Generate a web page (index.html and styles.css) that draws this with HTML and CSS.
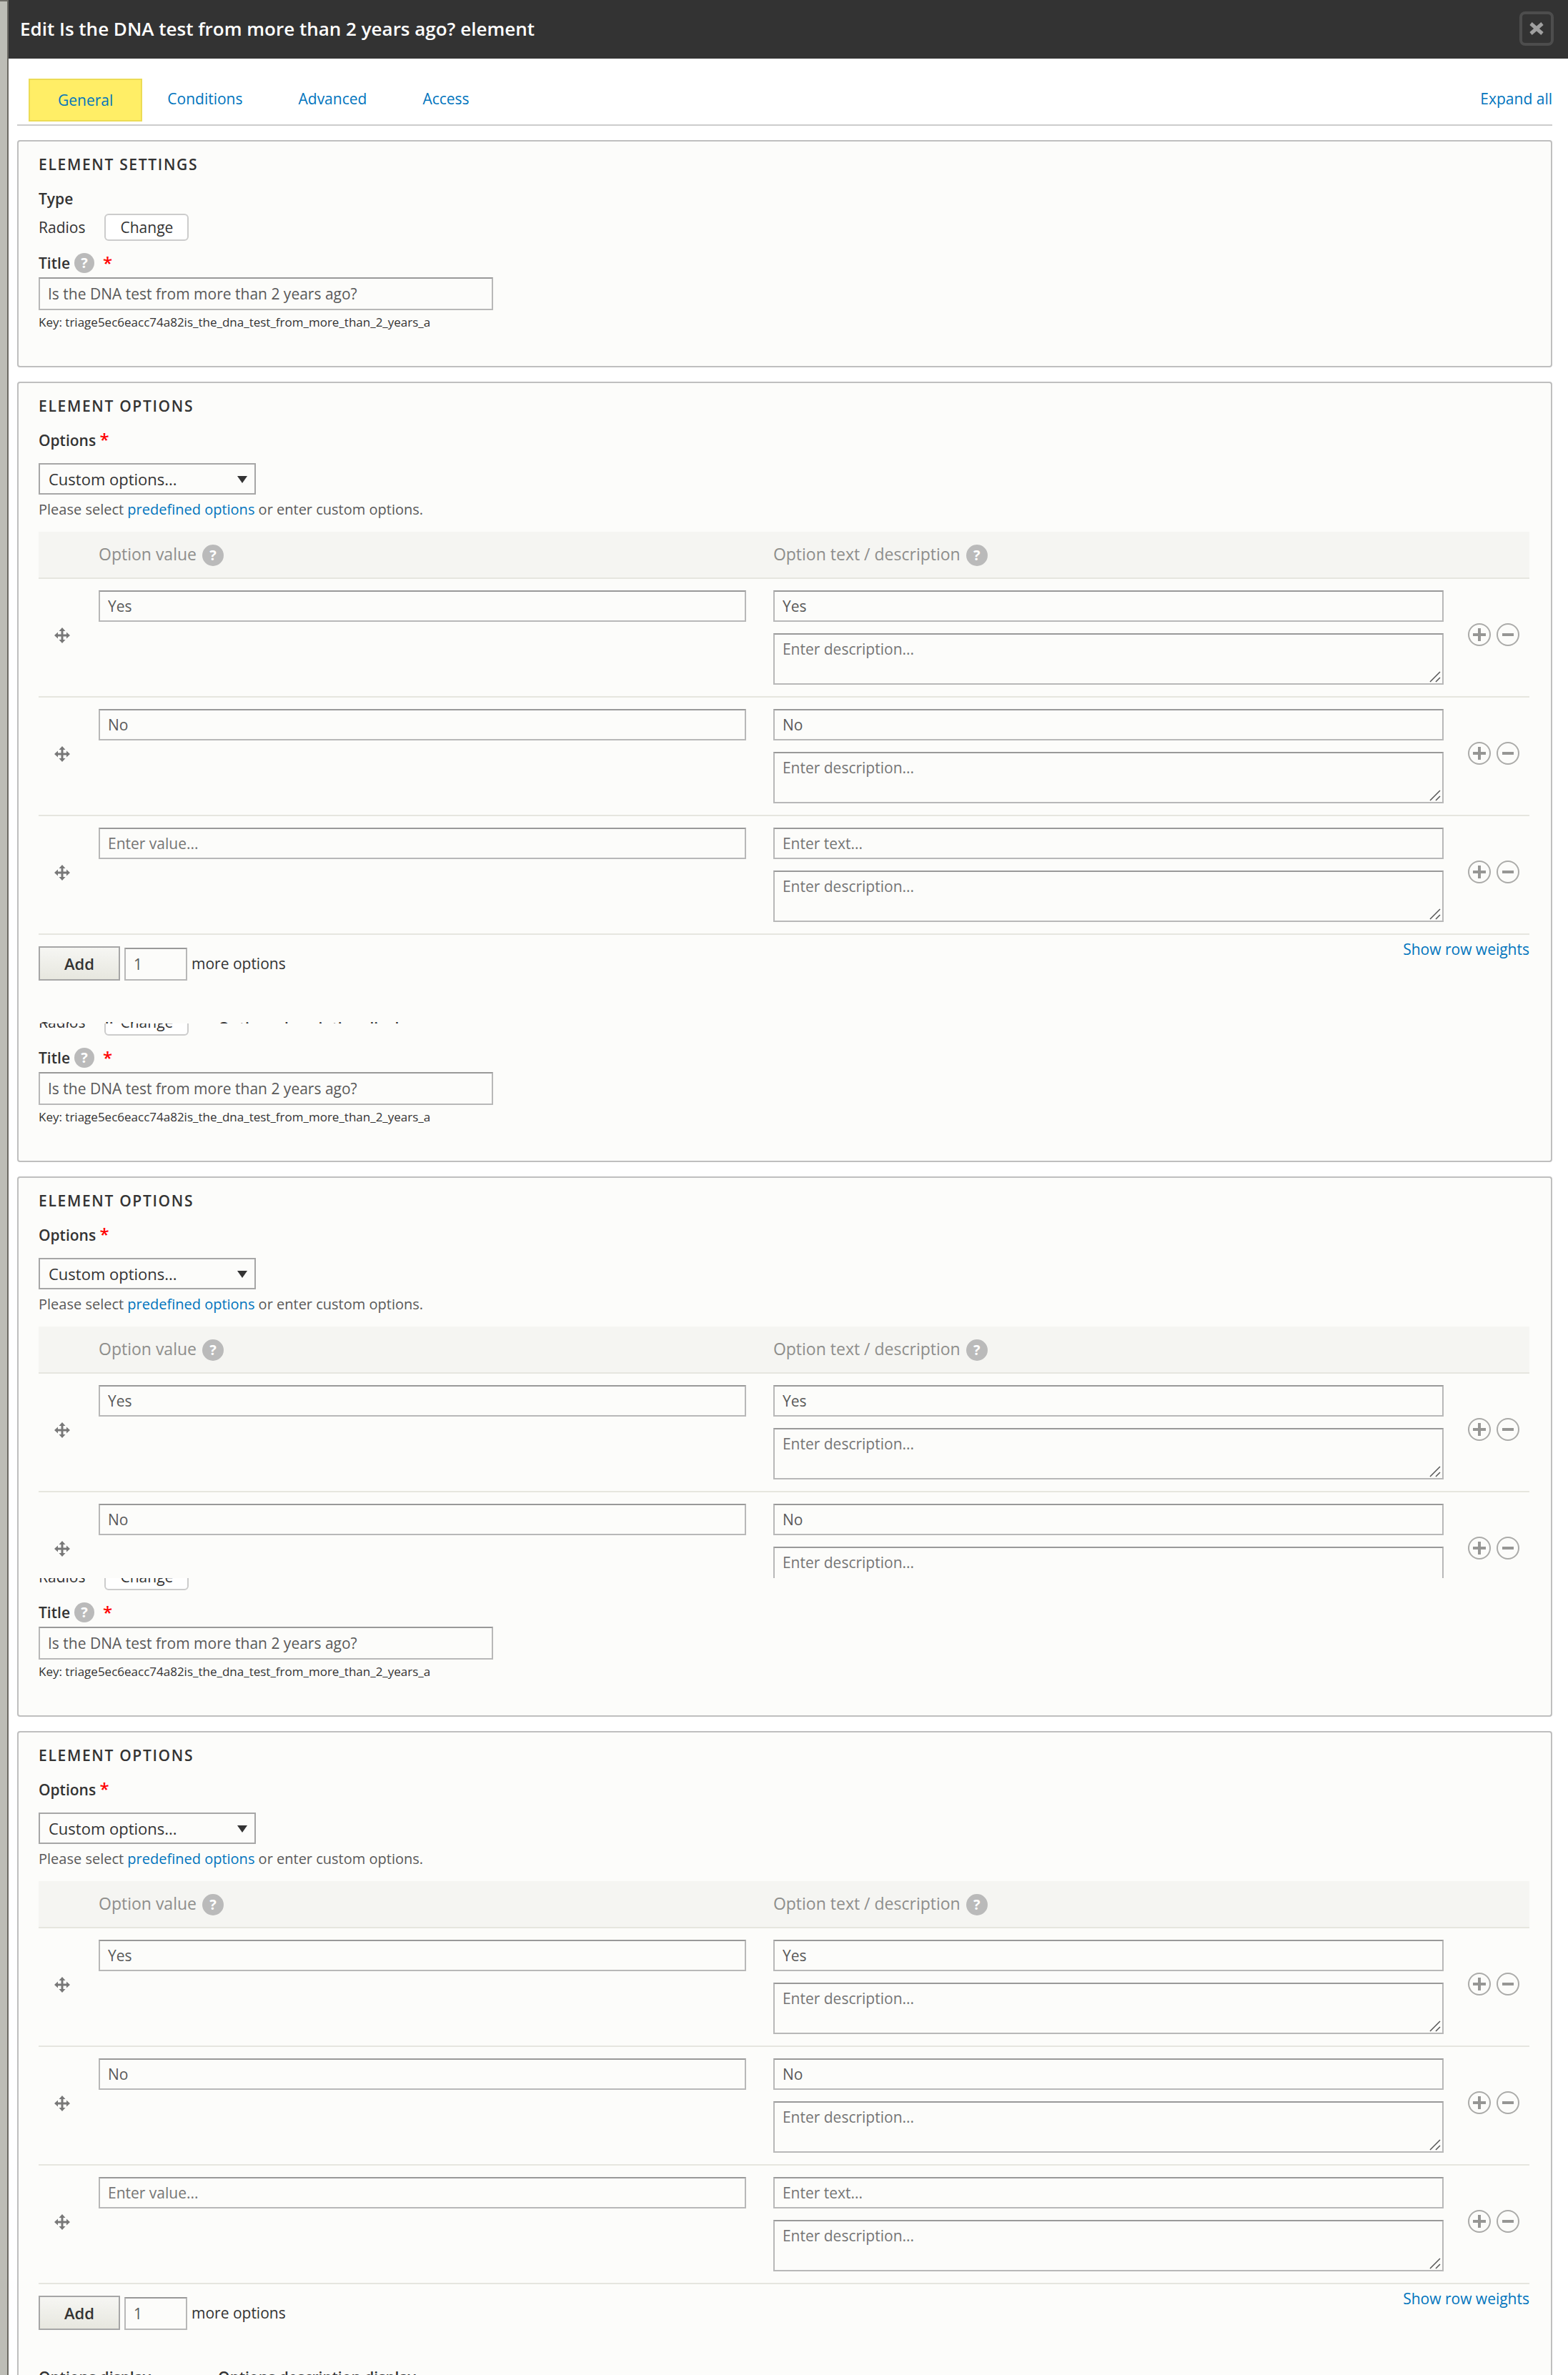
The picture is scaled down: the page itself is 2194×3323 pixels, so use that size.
FILE: index.html
```html
<!DOCTYPE html>
<html lang="en">
<head>
  <meta charset="UTF-8">
  <meta name="viewport" content="width=device-width, initial-scale=1.0">
  <title>Edit element</title>
  <link rel="stylesheet" href="styles.css">
</head>
<body>
  <!-- Shared icons -->
  <svg class="sprite" aria-hidden="true">
    <symbol id="icon-move" viewBox="0 0 22 22">
      <path d="M11 0 15.500 5H12.500V9.500H17V6.500L22 11 17 15.500V12.500H12.500V17H15.500L11 22 6.500 17H9.500V12.500H5V15.500L0 11 5 6.500V9.500H9.500V5H6.500Z" fill="#787878"/>
    </symbol>
    <symbol id="icon-plus" viewBox="0 0 32 32">
      <circle cx="16" cy="16" r="15" fill="none" stroke="#ababa9" stroke-width="2"/>
      <path d="M7 16H25M16 7V25" stroke="#969694" stroke-width="4"/>
    </symbol>
    <symbol id="icon-minus" viewBox="0 0 32 32">
      <circle cx="16" cy="16" r="15" fill="none" stroke="#ababa9" stroke-width="2"/>
      <path d="M8 16H24" stroke="#969694" stroke-width="4"/>
    </symbol>
    <symbol id="icon-grip" viewBox="0 0 16 16">
      <path d="M1 15 15 1M9 15 15 9" stroke="#555" stroke-width="1.500"/>
    </symbol>
    <symbol id="icon-arrow" viewBox="0 0 14 10">
      <path d="M0 0H14L7 10Z" fill="#333"/>
    </symbol>
  </svg>

  <div class="dialog">
    <header class="titlebar">
      <h1>Edit Is the DNA test from more than 2 years ago? element</h1>
      <button class="close" type="button" aria-label="Close">
        <svg width="20" height="18" viewBox="0 0 20 18"><path d="M2 2 18 16M18 2 2 16" stroke="#a0a0a0" stroke-width="5"/></svg>
      </button>
    </header>

    <div class="pane">
      <nav class="tabs">
        <a class="tab active" href="#general">General</a>
        <a class="tab" href="#conditions">Conditions</a>
        <a class="tab" href="#advanced">Advanced</a>
        <a class="tab" href="#access">Access</a>
        <a class="expand" href="#expand">Expand all</a>
      </nav>

      <section class="panel">
        <h2>Element settings</h2>
        <div class="label">Type</div>
        <div class="type-row"><span>Radios</span><button class="change" type="button">Change</button></div>
        <div class="title-label"><label for="title-1">Title</label><span class="help">?</span><span class="required">*</span></div>
        <input class="text title-input" id="title-1" type="text" value="Is the DNA test from more than 2 years ago?">
        <p class="key">Key: triage5ec6eacc74a82is_the_dna_test_from_more_than_2_years_a</p>
      </section>

      <section class="panel open">
        <h2>Element options</h2>
        <label class="label" for="options-1">Options <span class="required">*</span></label>
        <div class="select">
          <select id="options-1"><option>Custom options...</option></select>
          <svg class="arrow"><use href="#icon-arrow"/></svg>
        </div>
        <p class="description">Please select <a href="#predefined">predefined options</a> or enter custom options.</p>
        <table class="options">
          <thead>
            <tr>
              <th class="drag"></th>
              <th class="value">Option value <span class="help">?</span></th>
              <th>Option text / description <span class="help">?</span></th>
              <th class="ops"></th>
            </tr>
          </thead>
          <tbody>
            <tr>
              <td class="drag"><svg class="move"><use href="#icon-move"/></svg></td>
              <td class="value"><input class="text" type="text" aria-label="Option value" value="Yes"></td>
              <td>
                <input class="text" type="text" aria-label="Option text" value="Yes">
                <div class="area"><textarea aria-label="Option description" placeholder="Enter description..."></textarea><svg class="grip"><use href="#icon-grip"/></svg></div>
              </td>
              <td class="ops"><div class="actions"><button type="button" aria-label="Add"><svg><use href="#icon-plus"/></svg></button><button type="button" aria-label="Remove"><svg><use href="#icon-minus"/></svg></button></div></td>
            </tr>
            <tr>
              <td class="drag"><svg class="move"><use href="#icon-move"/></svg></td>
              <td class="value"><input class="text" type="text" aria-label="Option value" value="No"></td>
              <td>
                <input class="text" type="text" aria-label="Option text" value="No">
                <div class="area"><textarea aria-label="Option description" placeholder="Enter description..."></textarea><svg class="grip"><use href="#icon-grip"/></svg></div>
              </td>
              <td class="ops"><div class="actions"><button type="button" aria-label="Add"><svg><use href="#icon-plus"/></svg></button><button type="button" aria-label="Remove"><svg><use href="#icon-minus"/></svg></button></div></td>
            </tr>
            <tr>
              <td class="drag"><svg class="move"><use href="#icon-move"/></svg></td>
              <td class="value"><input class="text" type="text" aria-label="Option value" placeholder="Enter value..."></td>
              <td>
                <input class="text" type="text" aria-label="Option text" placeholder="Enter text...">
                <div class="area"><textarea aria-label="Option description" placeholder="Enter description..."></textarea><svg class="grip"><use href="#icon-grip"/></svg></div>
              </td>
              <td class="ops"><div class="actions"><button type="button" aria-label="Add"><svg><use href="#icon-plus"/></svg></button><button type="button" aria-label="Remove"><svg><use href="#icon-minus"/></svg></button></div></td>
            </tr>
          </tbody>
        </table>
        <div class="table-footer">
          <div class="add-row">
            <button class="add" type="button">Add</button>
            <input class="text count" id="more-1" type="text" value="1">
            <label for="more-1">more options</label>
          </div>
          <a href="#weights">Show row weights</a>
        </div>
        <div class="display-row"><span>Options display</span><span>Options description display</span></div>
      </section>
    </div>

    <div class="pane continued short">
      <section class="panel">
        <div class="type-row"><span>Radios</span><button class="change" type="button">Change</button></div>
        <div class="title-label"><label for="title-2">Title</label><span class="help">?</span><span class="required">*</span></div>
        <input class="text title-input" id="title-2" type="text" value="Is the DNA test from more than 2 years ago?">
        <p class="key">Key: triage5ec6eacc74a82is_the_dna_test_from_more_than_2_years_a</p>
      </section>

      <section class="panel open">
        <h2>Element options</h2>
        <label class="label" for="options-2">Options <span class="required">*</span></label>
        <div class="select">
          <select id="options-2"><option>Custom options...</option></select>
          <svg class="arrow"><use href="#icon-arrow"/></svg>
        </div>
        <p class="description">Please select <a href="#predefined">predefined options</a> or enter custom options.</p>
        <table class="options">
          <thead>
            <tr>
              <th class="drag"></th>
              <th class="value">Option value <span class="help">?</span></th>
              <th>Option text / description <span class="help">?</span></th>
              <th class="ops"></th>
            </tr>
          </thead>
          <tbody>
            <tr>
              <td class="drag"><svg class="move"><use href="#icon-move"/></svg></td>
              <td class="value"><input class="text" type="text" aria-label="Option value" value="Yes"></td>
              <td>
                <input class="text" type="text" aria-label="Option text" value="Yes">
                <div class="area"><textarea aria-label="Option description" placeholder="Enter description..."></textarea><svg class="grip"><use href="#icon-grip"/></svg></div>
              </td>
              <td class="ops"><div class="actions"><button type="button" aria-label="Add"><svg><use href="#icon-plus"/></svg></button><button type="button" aria-label="Remove"><svg><use href="#icon-minus"/></svg></button></div></td>
            </tr>
            <tr>
              <td class="drag"><svg class="move"><use href="#icon-move"/></svg></td>
              <td class="value"><input class="text" type="text" aria-label="Option value" value="No"></td>
              <td>
                <input class="text" type="text" aria-label="Option text" value="No">
                <div class="area"><textarea aria-label="Option description" placeholder="Enter description..."></textarea><svg class="grip"><use href="#icon-grip"/></svg></div>
              </td>
              <td class="ops"><div class="actions"><button type="button" aria-label="Add"><svg><use href="#icon-plus"/></svg></button><button type="button" aria-label="Remove"><svg><use href="#icon-minus"/></svg></button></div></td>
            </tr>
          </tbody>
        </table>
      </section>
    </div>

    <div class="pane continued last">
      <section class="panel">
        <div class="type-row"><span>Radios</span><button class="change" type="button">Change</button></div>
        <div class="title-label"><label for="title-3">Title</label><span class="help">?</span><span class="required">*</span></div>
        <input class="text title-input" id="title-3" type="text" value="Is the DNA test from more than 2 years ago?">
        <p class="key">Key: triage5ec6eacc74a82is_the_dna_test_from_more_than_2_years_a</p>
      </section>

      <section class="panel open">
        <h2>Element options</h2>
        <label class="label" for="options-3">Options <span class="required">*</span></label>
        <div class="select">
          <select id="options-3"><option>Custom options...</option></select>
          <svg class="arrow"><use href="#icon-arrow"/></svg>
        </div>
        <p class="description">Please select <a href="#predefined">predefined options</a> or enter custom options.</p>
        <table class="options">
          <thead>
            <tr>
              <th class="drag"></th>
              <th class="value">Option value <span class="help">?</span></th>
              <th>Option text / description <span class="help">?</span></th>
              <th class="ops"></th>
            </tr>
          </thead>
          <tbody>
            <tr>
              <td class="drag"><svg class="move"><use href="#icon-move"/></svg></td>
              <td class="value"><input class="text" type="text" aria-label="Option value" value="Yes"></td>
              <td>
                <input class="text" type="text" aria-label="Option text" value="Yes">
                <div class="area"><textarea aria-label="Option description" placeholder="Enter description..."></textarea><svg class="grip"><use href="#icon-grip"/></svg></div>
              </td>
              <td class="ops"><div class="actions"><button type="button" aria-label="Add"><svg><use href="#icon-plus"/></svg></button><button type="button" aria-label="Remove"><svg><use href="#icon-minus"/></svg></button></div></td>
            </tr>
            <tr>
              <td class="drag"><svg class="move"><use href="#icon-move"/></svg></td>
              <td class="value"><input class="text" type="text" aria-label="Option value" value="No"></td>
              <td>
                <input class="text" type="text" aria-label="Option text" value="No">
                <div class="area"><textarea aria-label="Option description" placeholder="Enter description..."></textarea><svg class="grip"><use href="#icon-grip"/></svg></div>
              </td>
              <td class="ops"><div class="actions"><button type="button" aria-label="Add"><svg><use href="#icon-plus"/></svg></button><button type="button" aria-label="Remove"><svg><use href="#icon-minus"/></svg></button></div></td>
            </tr>
            <tr>
              <td class="drag"><svg class="move"><use href="#icon-move"/></svg></td>
              <td class="value"><input class="text" type="text" aria-label="Option value" placeholder="Enter value..."></td>
              <td>
                <input class="text" type="text" aria-label="Option text" placeholder="Enter text...">
                <div class="area"><textarea aria-label="Option description" placeholder="Enter description..."></textarea><svg class="grip"><use href="#icon-grip"/></svg></div>
              </td>
              <td class="ops"><div class="actions"><button type="button" aria-label="Add"><svg><use href="#icon-plus"/></svg></button><button type="button" aria-label="Remove"><svg><use href="#icon-minus"/></svg></button></div></td>
            </tr>
          </tbody>
        </table>
        <div class="table-footer">
          <div class="add-row">
            <button class="add" type="button">Add</button>
            <input class="text count" id="more-3" type="text" value="1">
            <label for="more-3">more options</label>
          </div>
          <a href="#weights">Show row weights</a>
        </div>
        <div class="display-row"><span>Options display</span><span>Options description display</span></div>
      </section>
    </div>
  </div>
</body>
</html>
```
FILE: styles.css
```css
/* Global Styles */
* {
  margin: 0;
  padding: 0;
  box-sizing: border-box;
  font-family: 'Open Sans', sans-serif;
}

body {
  height: 100vh;
  overflow: hidden;
  padding-left: 10px;
  background: linear-gradient(#6e6c66 2px, #bdbdb6 2px);
  color: #333;
  font-size: 21px;
  line-height: 28px;
}

a {
  color: #0074bd;
  text-decoration: none;
}

.sprite {
  display: none;
}

.dialog {
  display: flex;
  flex-direction: column;
  height: 100%;
  border-left: 2px solid #6b6963;
  background: #fff;
}

/* Title bar */
.titlebar {
  display: flex;
  flex: none;
  justify-content: space-between;
  align-items: center;
  height: 82px;
  padding: 0 20px 2px 16px;
  background: #333;
}

h1 {
  color: #fff;
  font-size: 26px;
  font-weight: 600;
}

.close {
  display: flex;
  align-items: center;
  justify-content: center;
  width: 48px;
  height: 48px;
  border: 4px solid #4d4d4d;
  border-radius: 8px;
  background: none;
}

/* Tabs */
.tabs {
  display: flex;
  align-items: center;
  height: 94px;
  margin-bottom: 20px;
  padding: 20px 0 0 16px;
  border-bottom: 2px solid #ccc;
}

.tab {
  padding: 0 39px;
}

.tab.active {
  margin-top: 4px;
  margin-right: -4px;
  padding: 14px 39px;
  border: 2px solid #ecdc55;
  background: #ffee66;
}

.expand {
  margin-left: auto;
}

/* Panes */
.pane {
  flex: none;
  overflow: hidden;
  padding: 0 22px 0 12px;
}

.pane.short {
  height: 776px;
}

.pane.last {
  flex: 1;
  min-height: 0;
}

.panel {
  margin-bottom: 20px;
  padding: 18px 30px 49px 28px;
  border: 2px solid #bfbfbf;
  border-radius: 4px;
  background: #fcfcfa;
}

.panel.open {
  margin-bottom: 0;
  padding-bottom: 0;
  border-bottom: 0;
  border-bottom-left-radius: 0;
  border-bottom-right-radius: 0;
}

.pane.continued .panel:first-child {
  margin-top: -28px;
  padding-top: 0;
  border-top: 0;
}

h2 {
  margin-bottom: 20px;
  font-size: 21px;
  font-weight: 600;
  letter-spacing: 0.08em;
  text-transform: uppercase;
}

.label,
.title-label label {
  display: block;
  font-weight: 600;
}

.required {
  color: #f00;
  font-size: 24px;
  line-height: 20px;
}

.type-row {
  display: flex;
  align-items: center;
  gap: 27px;
  padding: 7px 0 17px;
}

.change {
  width: 118px;
  height: 38px;
  border: 2px solid #ccc;
  border-radius: 6px;
  background: #fff;
  color: #333;
  font-size: 21px;
}

.title-label {
  display: flex;
  align-items: center;
  margin-bottom: 6px;
}

.title-label .required {
  margin-left: 12px;
  font-weight: 600;
}

.help {
  display: inline-block;
  width: 28px;
  height: 28px;
  margin-left: 6px;
  border-radius: 50%;
  background: #bababa;
  color: #fff;
  font-size: 20px;
  font-weight: 700;
  line-height: 28px;
  text-align: center;
}

/* Form fields */
.text,
textarea {
  display: block;
  width: 100%;
  height: 44px;
  padding: 0 11px;
  border: 2px solid #b8b8b8;
  border-top-color: #999;
  background: #fcfcfa;
  color: #595959;
  font-size: 21px;
}

textarea {
  height: 72px;
  padding-top: 6px;
  line-height: 28px;
  resize: none;
}

::placeholder {
  color: #757575;
}

.title-input {
  width: 636px;
  max-width: 100%;
  height: 46px;
}

.key {
  margin-top: 5px;
  font-size: 17px;
  line-height: 24px;
}

.select {
  position: relative;
  width: 304px;
  margin-top: 18px;
}

.select select {
  display: block;
  width: 100%;
  height: 44px;
  padding: 0 12px;
  border: 2px solid #a6a6a6;
  border-radius: 0;
  background: #fcfcfa;
  color: #333;
  font-size: 22px;
  appearance: none;
}

.arrow {
  position: absolute;
  top: 18px;
  right: 12px;
  width: 14px;
  height: 10px;
  pointer-events: none;
}

.description {
  margin: 7px 0 17px;
  color: #595959;
  font-size: 20px;
}

/* Options table */
.options {
  width: 100%;
  table-layout: fixed;
  border-spacing: 0;
}

.options th {
  height: 66px;
  padding: 0 18px;
  border-bottom: 2px solid #e6e6df;
  background: #f5f5f2;
  color: #8e8e8c;
  font-size: 23px;
  font-weight: 400;
  text-align: left;
}

.options th .help {
  width: 30px;
  height: 30px;
  margin-left: 2px;
  line-height: 30px;
}

.options td {
  padding: 16px 18px;
  border-bottom: 2px solid #e6e6df;
  vertical-align: top;
}

.options .drag {
  width: 66px;
  padding: 0 22px 6px;
  vertical-align: middle;
}

.options .value {
  width: 45.25%;
  padding-right: 20px;
}

.options .ops {
  width: 102px;
  padding: 0 14px 8px 16px;
  vertical-align: middle;
}

.move {
  display: block;
  width: 22px;
  height: 22px;
}

.area {
  position: relative;
  margin-top: 16px;
}

.area textarea {
  display: block;
}

.grip {
  position: absolute;
  right: 4px;
  bottom: 3px;
  width: 16px;
  height: 16px;
  pointer-events: none;
}

.actions {
  display: flex;
  gap: 8px;
}

.actions button {
  width: 32px;
  height: 32px;
  border: 0;
  background: none;
}

.actions svg {
  display: block;
  width: 32px;
  height: 32px;
}

/* Below the table */
.table-footer {
  display: flex;
  justify-content: space-between;
  align-items: flex-start;
  padding-top: 6px;
}

.add-row {
  display: flex;
  align-items: flex-end;
  gap: 6px;
  margin-top: 10px;
}

.add-row label {
  padding-bottom: 10px;
}

.add {
  width: 114px;
  height: 48px;
  border: 2px solid #a6a6a6;
  background: linear-gradient(#f6f6f3, #e7e7df);
  color: #333;
  font-size: 22px;
  font-weight: 600;
}

.count {
  width: 88px;
  height: 46px;
}

/* Only the top edge of this line shows */
.display-row {
  display: flex;
  gap: 94px;
  height: 8px;
  margin-top: 52px;
  overflow: hidden;
  font-weight: 600;
}

.pane.last .display-row {
  height: auto;
}
```
